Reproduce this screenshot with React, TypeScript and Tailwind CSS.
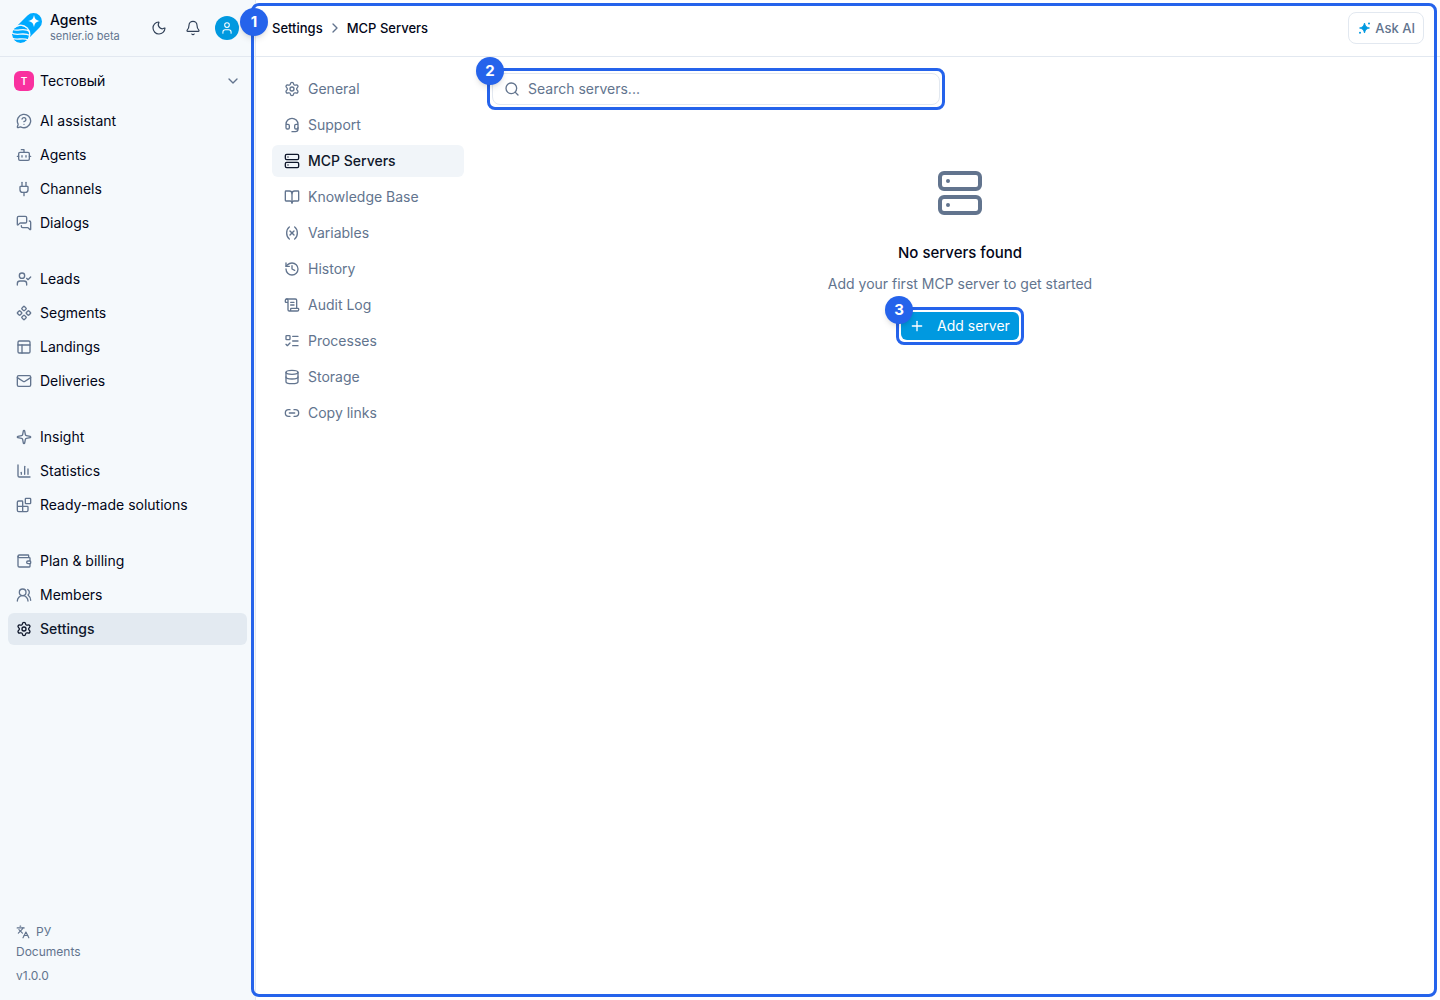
import type { ReactNode } from "react";
import {
  Blocks,
  BookOpen,
  Bot,
  ChartColumn,
  ChevronDown,
  ChevronRight,
  Component,
  Database,
  Headset,
  History,
  Languages,
  Link2,
  ListTodo,
  Mail,
  MessageCircleQuestionMark,
  MessagesSquare,
  Bell,
  Moon,
  PanelsTopLeft,
  Plug,
  Plus,
  ScrollText,
  Search,
  Server,
  Settings,
  Sparkle,
  User,
  UserCheck,
  UsersRound,
  Variable,
  Wallet,
  type LucideIcon,
} from "lucide-react";

type Item = { label: string; icon: LucideIcon; active?: boolean };

const groups: Item[][] = [
  [
    { label: "AI assistant", icon: MessageCircleQuestionMark },
    { label: "Agents", icon: Bot },
    { label: "Channels", icon: Plug },
    { label: "Dialogs", icon: MessagesSquare },
  ],
  [
    { label: "Leads", icon: UserCheck },
    { label: "Segments", icon: Component },
    { label: "Landings", icon: PanelsTopLeft },
    { label: "Deliveries", icon: Mail },
  ],
  [
    { label: "Insight", icon: Sparkle },
    { label: "Statistics", icon: ChartColumn },
    { label: "Ready-made solutions", icon: Blocks },
  ],
  [
    { label: "Plan & billing", icon: Wallet },
    { label: "Members", icon: UsersRound },
    { label: "Settings", icon: Settings, active: true },
  ],
];

const settingsItems: Item[] = [
  { label: "General", icon: Settings },
  { label: "Support", icon: Headset },
  { label: "MCP Servers", icon: Server, active: true },
  { label: "Knowledge Base", icon: BookOpen },
  { label: "Variables", icon: Variable },
  { label: "History", icon: History },
  { label: "Audit Log", icon: ScrollText },
  { label: "Processes", icon: ListTodo },
  { label: "Storage", icon: Database },
  { label: "Copy links", icon: Link2 },
];

function Logo() {
  return (
    <svg viewBox="0 0 32 32" className="size-8 shrink-0" aria-hidden="true">
      <defs>
        <mask id="capsule" maskUnits="userSpaceOnUse" x="0" y="0" width="32" height="32">
          <rect width="32" height="32" fill="#fff" />
          <circle cx="9.600" cy="22.400" r="9.900" fill="#000" />
        </mask>
        <mask id="ball" maskUnits="userSpaceOnUse" x="0" y="0" width="32" height="32">
          <circle cx="9.600" cy="22.400" r="8.600" fill="#fff" />
          <g fill="none" stroke="#000" strokeWidth="1.300">
            <path d="M2 17.500C7 20 12 15 19 19.500" />
            <path d="M0 20.500C5 25 12 19.500 19 23.500" />
            <path d="M1 26C6 29 11 25 17.500 28" />
          </g>
        </mask>
      </defs>
      <path d="M22.500 9.500 9.500 22.500" stroke="#00aaff" strokeWidth="17" strokeLinecap="round" mask="url(#capsule)" />
      <circle cx="9.600" cy="22.400" r="8.600" fill="#00aaff" mask="url(#ball)" />
      <path d="M23 3C23.800 7 25 8.200 29 9 25 9.800 23.800 11 23 15 22.200 11 21 9.800 17 9 21 8.200 22.200 7 23 3Z" fill="#fff" />
    </svg>
  );
}

function AskIcon() {
  return (
    <svg viewBox="0 0 16 16" className="size-4" fill="#0099e0" aria-hidden="true">
      <path d="M7.500 3C8.300 6.200 9.300 7.200 12.500 8 9.300 8.800 8.300 9.800 7.500 13 6.700 9.800 5.700 8.800 2.500 8 5.700 7.200 6.700 6.200 7.500 3Z" stroke="#0099e0" strokeWidth=".8" strokeLinejoin="round" />
      <circle cx="12" cy="3.400" r="1" />
      <circle cx="3" cy="12.800" r="1" />
    </svg>
  );
}

function Badge({ className, children }: { className: string; children: ReactNode }) {
  return (
    <span
      className={`absolute flex size-7 items-center justify-center rounded-full bg-[#2563eb] text-[15px] font-bold text-white shadow-md ${className}`}
    >
      {children}
    </span>
  );
}

function Marker({ n }: { n: number }) {
  return (
    <div className="pointer-events-none absolute -inset-[5px] z-10 rounded-lg border-3 border-[#2563eb]">
      <Badge className="-top-3.5 -left-3.5">{n}</Badge>
    </div>
  );
}

export default function App() {
  return (
    <div className="flex min-h-screen bg-white font-['Inter',sans-serif] text-sm text-slate-950">
      <aside className="flex w-64 shrink-0 flex-col border-r border-slate-200 bg-[#f5f9fc]">
        <header className="flex h-[57px] items-center border-b border-slate-200 pr-4 pl-[11px]">
          <Logo />
          <div className="ml-[7px] flex-1">
            <div className="text-sm leading-4 font-medium">Agents</div>
            <div className="text-[11px] leading-4 text-slate-500">senler.io beta</div>
          </div>
          <button aria-label="Dark theme" className="flex size-8 items-center justify-center text-slate-700">
            <Moon className="size-4" strokeWidth={1.75} />
          </button>
          <button aria-label="Notifications" className="ml-0.5 flex size-8 items-center justify-center text-slate-700">
            <Bell className="size-4" strokeWidth={1.75} />
          </button>
          <button aria-label="Account" className="ml-1.5 flex size-6 items-center justify-center rounded-full bg-[#0099e0] text-white">
            <User className="size-3.5" strokeWidth={1.75} />
          </button>
        </header>
        <button className="mx-2 mt-2 flex h-8 items-center gap-1.5 px-1.5 text-left">
          <span className="flex size-5 items-center justify-center rounded-md bg-[#f9319f] text-[10px] font-semibold text-white">T</span>
          <span className="flex-1">Тестовый</span>
          <ChevronDown className="size-4 text-slate-500" />
        </button>
        <nav aria-label="Main" className="mt-2 flex flex-col gap-6 px-2">
          {groups.map((group, i) => (
            <ul key={i} className="flex flex-col gap-0.5">
              {group.map(({ label, icon: Icon, active }) => (
                <li key={label}>
                  <a
                    href="#"
                    className={
                      active
                        ? "flex h-8 items-center gap-2 rounded-md bg-[#e3eaf1] px-2 font-medium text-slate-900"
                        : "flex h-8 items-center gap-2 rounded-md px-2"
                    }
                  >
                    <Icon className={active ? "size-4" : "size-4 text-slate-500"} />
                    {label}
                  </a>
                </li>
              ))}
            </ul>
          ))}
        </nav>
        <footer className="mt-auto flex flex-col items-start px-4 pb-3 text-xs text-slate-500">
          <button className="flex h-5 items-center gap-1.5">
            <Languages className="size-3.5" />
            РУ
          </button>
          <a href="#" className="leading-5">Documents</a>
          <span className="mt-0.5 leading-6">v1.0.0</span>
        </footer>
      </aside>

      <div className="relative flex min-w-0 flex-1 flex-col">
        <div className="pointer-events-none absolute top-[3px] right-[3px] bottom-[3px] -left-[5px] z-10 rounded-lg border-3 border-[#2563eb]">
          <Badge className="top-0.5 -left-3.5">1</Badge>
        </div>
        <header className="flex h-[57px] items-center justify-between border-b border-slate-200 px-4">
          <nav aria-label="Breadcrumb" className="flex items-center gap-1 text-[13px] font-medium">
            <a href="#">Settings</a>
            <ChevronRight className="size-4 text-slate-500" />
            <span aria-current="page">MCP Servers</span>
          </nav>
          <button className="flex h-8 items-center gap-0.5 rounded-lg border border-slate-200 px-2 text-[13px] font-medium text-slate-500">
            <AskIcon />
            Ask AI
          </button>
        </header>
        <div className="flex flex-1">
          <nav aria-label="Settings" className="w-56 shrink-0 p-4">
            <ul className="flex flex-col gap-1">
              {settingsItems.map(({ label, icon: Icon, active }) => (
                <li key={label}>
                  <a
                    href="#"
                    className={
                      active
                        ? "flex h-8 items-center gap-2 rounded-md bg-slate-100 px-3 font-medium text-slate-900"
                        : "flex h-8 items-center gap-2 rounded-md px-3 text-slate-500"
                    }
                  >
                    <Icon className="size-4" />
                    {label}
                  </a>
                </li>
              ))}
            </ul>
          </nav>
          <main className="flex min-w-0 flex-1 flex-col px-3 pt-4">
            <div className="relative w-full max-w-md">
              <Marker n={2} />
              <label className="flex h-8 items-center gap-2 rounded-lg border border-slate-200 px-[11px] text-slate-500">
                <Search className="size-4 shrink-0" />
                <input
                  type="search"
                  aria-label="Search servers"
                  placeholder="Search servers..."
                  className="min-w-0 flex-1 bg-transparent text-slate-900 outline-none placeholder:text-slate-500"
                />
              </label>
            </div>
            <section className="mt-16 flex flex-col items-center text-center">
              <Server className="size-12 text-slate-500" />
              <h1 className="mt-6 text-[15px] leading-6 font-medium">No servers found</h1>
              <p className="mt-2 leading-relaxed text-slate-500">Add your first MCP server to get started</p>
              <div className="relative mt-4">
                <Marker n={3} />
                <button className="flex h-7 min-w-[118px] items-center gap-3 rounded-md bg-[#0099e0] px-2 text-white">
                  <Plus className="size-4" />
                  Add server
                </button>
              </div>
            </section>
          </main>
        </div>
      </div>
    </div>
  );
}
